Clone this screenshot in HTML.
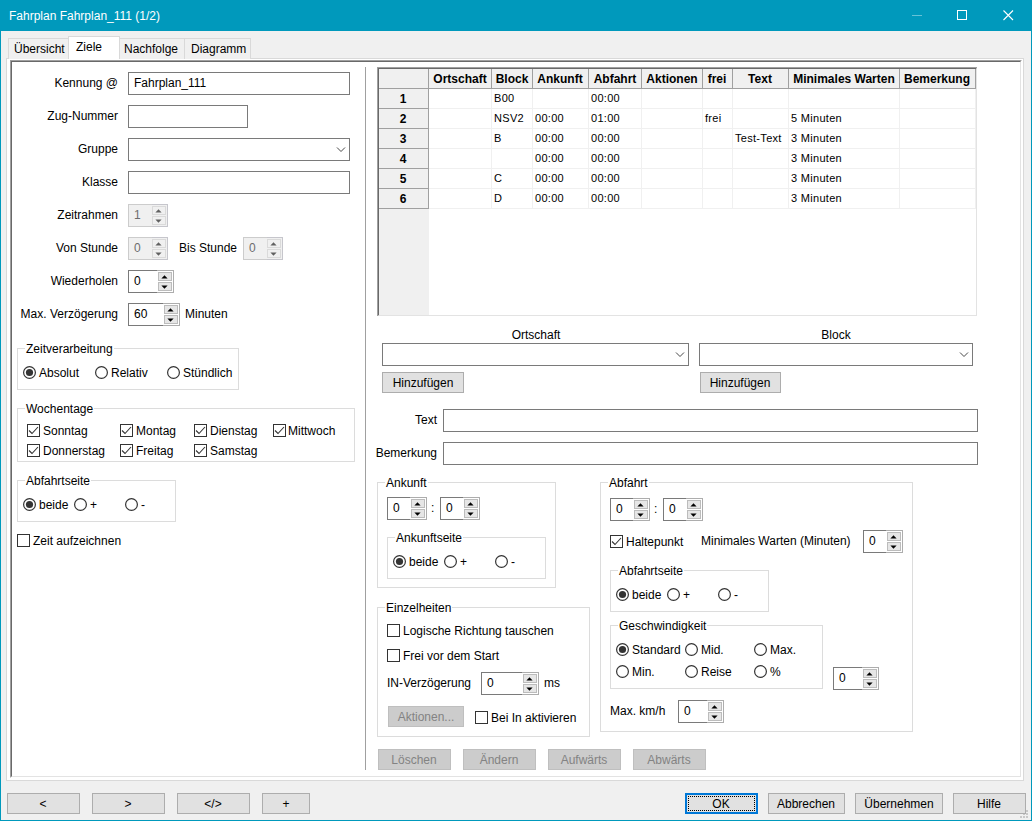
<!DOCTYPE html>
<html><head><meta charset="utf-8"><style>
html,body{margin:0;padding:0;width:1032px;height:821px;overflow:hidden;background:#f0f0f0}
body>div,body>svg{position:absolute;box-sizing:border-box}
.t{font-family:'Liberation Sans',sans-serif;font-size:12px;line-height:14px;white-space:nowrap;color:#000}
</style></head><body>
<div style="left:0;top:0;width:1032px;height:821px;background:#0099bc"></div>
<div style="left:1px;top:31px;width:1030px;height:789px;background:#f0f0f0;"></div>
<div class="t" style="left:9px;top:9px;color:#fff">Fahrplan Fahrplan_111 (1/2)</div>
<div style="left:912px;top:15px;width:10px;height:1px;background:#66c2d7"></div>
<div style="left:957px;top:10px;width:10px;height:10px;border:1px solid #fff;"></div>
<svg style="left:1003px;top:10px" width="11" height="11"><path d="M0.5 0.5 L10 10 M10 0.5 L0.5 10" stroke="#fff" stroke-width="1.1"/></svg>
<div style="left:6px;top:58px;width:1018px;height:723px;background:#fff;border:1px solid #d9d9d9;"></div>
<div style="left:8px;top:38px;width:61px;height:21px;background:#f0f0f0;border:1px solid #d9d9d9;border-bottom:none;"></div>
<div style="left:119px;top:38px;width:66px;height:21px;background:#f0f0f0;border:1px solid #d9d9d9;border-bottom:none;"></div>
<div style="left:184px;top:38px;width:67px;height:21px;background:#f0f0f0;border:1px solid #d9d9d9;border-bottom:none;"></div>
<div style="left:68px;top:36px;width:52px;height:23px;background:#fff;border:1px solid #d9d9d9;border-bottom:none;"></div>
<div class="t" style="left:14px;top:42px;">Übersicht</div>
<div class="t" style="left:76px;top:40px;">Ziele</div>
<div class="t" style="left:124px;top:42px;">Nachfolge</div>
<div class="t" style="left:191px;top:42px;">Diagramm</div>
<div style="left:10px;top:60px;width:1012px;height:718px;border-top:1px solid #a0a0a0;border-left:1px solid #a0a0a0;border-right:1px solid #fff;border-bottom:1px solid #fff;"></div>
<div style="left:11px;top:61px;width:1010px;height:716px;border-top:1px solid #696969;border-left:1px solid #696969;border-right:1px solid #e3e3e3;border-bottom:1px solid #e3e3e3;"></div>
<div style="left:365px;top:67px;width:1px;height:703px;background:#a0a0a0;"></div>
<div class="t" style="right:914px;top:76px;">Kennung @</div>
<div style="left:128px;top:72px;width:222px;height:23px;background:#fff;border:1px solid #7a7a7a;"></div>
<div class="t" style="left:134px;top:76px;">Fahrplan_111</div>
<div class="t" style="right:914px;top:109px;">Zug-Nummer</div>
<div style="left:128px;top:105px;width:120px;height:23px;background:#fff;border:1px solid #7a7a7a;"></div>
<div class="t" style="right:914px;top:142px;">Gruppe</div>
<div style="left:128px;top:138px;width:222px;height:23px;background:#fff;border:1px solid #7a7a7a;"></div>
<svg style="left:336px;top:146px" width="10" height="7"><path d="M1 1.5 L5 5.5 L9 1.5" fill="none" stroke="#484848" stroke-width="1"/></svg>
<div class="t" style="right:914px;top:175px;">Klasse</div>
<div style="left:128px;top:171px;width:222px;height:23px;background:#fff;border:1px solid #7a7a7a;"></div>
<div class="t" style="right:914px;top:208px;">Zeitrahmen</div>
<div style="left:128px;top:204px;width:40px;height:23px;background:#f0f0f0;border:1px solid #cccccc;"></div>
<div style="left:152px;top:204px;width:16px;height:23px;border:1px solid #c6c6cc;border-left:none;"></div>
<div style="left:152px;top:206px;width:14px;height:9px;background:#f0f0f0;border:1px solid #dadada;"></div>
<div style="left:152px;top:216px;width:14px;height:9px;background:#f0f0f0;border:1px solid #dadada;"></div>
<div class="t" style="left:134px;top:208px;color:#6d6d6d">1</div>
<svg style="left:155px;top:209px" width="7" height="4"><path d="M3.5 0.2 L6.6 3.6 L0.4 3.6 Z" fill="#606060"/></svg>
<svg style="left:155px;top:219px" width="7" height="4"><path d="M0.4 0.4 L6.6 0.4 L3.5 3.8 Z" fill="#606060"/></svg>
<div class="t" style="right:914px;top:241px;">Von Stunde</div>
<div style="left:128px;top:237px;width:40px;height:23px;background:#f0f0f0;border:1px solid #cccccc;"></div>
<div style="left:152px;top:237px;width:16px;height:23px;border:1px solid #c6c6cc;border-left:none;"></div>
<div style="left:152px;top:239px;width:14px;height:9px;background:#f0f0f0;border:1px solid #dadada;"></div>
<div style="left:152px;top:249px;width:14px;height:9px;background:#f0f0f0;border:1px solid #dadada;"></div>
<div class="t" style="left:134px;top:241px;color:#6d6d6d">0</div>
<svg style="left:155px;top:242px" width="7" height="4"><path d="M3.5 0.2 L6.6 3.6 L0.4 3.6 Z" fill="#606060"/></svg>
<svg style="left:155px;top:252px" width="7" height="4"><path d="M0.4 0.4 L6.6 0.4 L3.5 3.8 Z" fill="#606060"/></svg>
<div class="t" style="left:179px;top:241px;">Bis Stunde</div>
<div style="left:243px;top:237px;width:40px;height:23px;background:#f0f0f0;border:1px solid #cccccc;"></div>
<div style="left:267px;top:237px;width:16px;height:23px;border:1px solid #c6c6cc;border-left:none;"></div>
<div style="left:267px;top:239px;width:14px;height:9px;background:#f0f0f0;border:1px solid #dadada;"></div>
<div style="left:267px;top:249px;width:14px;height:9px;background:#f0f0f0;border:1px solid #dadada;"></div>
<div class="t" style="left:249px;top:241px;color:#6d6d6d">0</div>
<svg style="left:270px;top:242px" width="7" height="4"><path d="M3.5 0.2 L6.6 3.6 L0.4 3.6 Z" fill="#606060"/></svg>
<svg style="left:270px;top:252px" width="7" height="4"><path d="M0.4 0.4 L6.6 0.4 L3.5 3.8 Z" fill="#606060"/></svg>
<div class="t" style="right:914px;top:274px;">Wiederholen</div>
<div style="left:128px;top:270px;width:46px;height:23px;background:#fff;border:1px solid #7a7a7a;"></div>
<div style="left:157px;top:270px;width:17px;height:23px;border:1px solid #adadad;border-left:none;"></div>
<div style="left:158px;top:272px;width:14px;height:9px;background:#e6e6e6;border:1px solid #bcbcbc;"></div>
<div style="left:158px;top:282px;width:14px;height:9px;background:#e6e6e6;border:1px solid #bcbcbc;"></div>
<div class="t" style="left:134px;top:274px;color:#000">0</div>
<svg style="left:161px;top:275px" width="7" height="4"><path d="M3.5 0.2 L6.6 3.6 L0.4 3.6 Z" fill="#000"/></svg>
<svg style="left:161px;top:285px" width="7" height="4"><path d="M0.4 0.4 L6.6 0.4 L3.5 3.8 Z" fill="#000"/></svg>
<div class="t" style="right:914px;top:307px;">Max. Verzögerung</div>
<div style="left:128px;top:303px;width:52px;height:23px;background:#fff;border:1px solid #7a7a7a;"></div>
<div style="left:163px;top:303px;width:17px;height:23px;border:1px solid #adadad;border-left:none;"></div>
<div style="left:164px;top:305px;width:14px;height:9px;background:#e6e6e6;border:1px solid #bcbcbc;"></div>
<div style="left:164px;top:315px;width:14px;height:9px;background:#e6e6e6;border:1px solid #bcbcbc;"></div>
<div class="t" style="left:134px;top:307px;color:#000">60</div>
<svg style="left:167px;top:308px" width="7" height="4"><path d="M3.5 0.2 L6.6 3.6 L0.4 3.6 Z" fill="#000"/></svg>
<svg style="left:167px;top:318px" width="7" height="4"><path d="M0.4 0.4 L6.6 0.4 L3.5 3.8 Z" fill="#000"/></svg>
<div class="t" style="left:185px;top:307px;">Minuten</div>
<div style="left:17px;top:348px;width:222px;height:42px;border:1px solid #dcdcdc;"></div>
<div class="t" style="left:25px;top:342px;background:#fff;padding:0 1px;">Zeitverarbeitung</div>
<svg style="left:23px;top:366px" width="13" height="13"><circle cx="6.5" cy="6.5" r="5.9" fill="#fff" stroke="#333" stroke-width="1.2"/><circle cx="6.5" cy="6.5" r="3.6" fill="#333"/></svg>
<div class="t" style="left:39px;top:366px;">Absolut</div>
<svg style="left:95px;top:366px" width="13" height="13"><circle cx="6.5" cy="6.5" r="5.9" fill="#fff" stroke="#333" stroke-width="1.2"/></svg>
<div class="t" style="left:111px;top:366px;">Relativ</div>
<svg style="left:167px;top:366px" width="13" height="13"><circle cx="6.5" cy="6.5" r="5.9" fill="#fff" stroke="#333" stroke-width="1.2"/></svg>
<div class="t" style="left:183px;top:366px;">Stündlich</div>
<div style="left:17px;top:408px;width:338px;height:54px;border:1px solid #dcdcdc;"></div>
<div class="t" style="left:25px;top:402px;background:#fff;padding:0 1px;">Wochentage</div>
<svg style="left:27px;top:424px" width="13" height="13"><rect x="0.5" y="0.5" width="12" height="12" fill="#fff" stroke="#333"/><path d="M2 6.5 L5 9.5 L11 3" fill="none" stroke="#333" stroke-width="1.1"/></svg>
<div class="t" style="left:43px;top:424px;">Sonntag</div>
<svg style="left:120px;top:424px" width="13" height="13"><rect x="0.5" y="0.5" width="12" height="12" fill="#fff" stroke="#333"/><path d="M2 6.5 L5 9.5 L11 3" fill="none" stroke="#333" stroke-width="1.1"/></svg>
<div class="t" style="left:136px;top:424px;">Montag</div>
<svg style="left:194px;top:424px" width="13" height="13"><rect x="0.5" y="0.5" width="12" height="12" fill="#fff" stroke="#333"/><path d="M2 6.5 L5 9.5 L11 3" fill="none" stroke="#333" stroke-width="1.1"/></svg>
<div class="t" style="left:210px;top:424px;">Dienstag</div>
<svg style="left:273px;top:424px" width="13" height="13"><rect x="0.5" y="0.5" width="12" height="12" fill="#fff" stroke="#333"/><path d="M2 6.5 L5 9.5 L11 3" fill="none" stroke="#333" stroke-width="1.1"/></svg>
<div class="t" style="left:288px;top:424px;">Mittwoch</div>
<svg style="left:27px;top:444px" width="13" height="13"><rect x="0.5" y="0.5" width="12" height="12" fill="#fff" stroke="#333"/><path d="M2 6.5 L5 9.5 L11 3" fill="none" stroke="#333" stroke-width="1.1"/></svg>
<div class="t" style="left:43px;top:444px;">Donnerstag</div>
<svg style="left:120px;top:444px" width="13" height="13"><rect x="0.5" y="0.5" width="12" height="12" fill="#fff" stroke="#333"/><path d="M2 6.5 L5 9.5 L11 3" fill="none" stroke="#333" stroke-width="1.1"/></svg>
<div class="t" style="left:136px;top:444px;">Freitag</div>
<svg style="left:194px;top:444px" width="13" height="13"><rect x="0.5" y="0.5" width="12" height="12" fill="#fff" stroke="#333"/><path d="M2 6.5 L5 9.5 L11 3" fill="none" stroke="#333" stroke-width="1.1"/></svg>
<div class="t" style="left:210px;top:444px;">Samstag</div>
<div style="left:17px;top:480px;width:159px;height:42px;border:1px solid #dcdcdc;"></div>
<div class="t" style="left:25px;top:474px;background:#fff;padding:0 1px;">Abfahrtseite</div>
<svg style="left:23px;top:498px" width="13" height="13"><circle cx="6.5" cy="6.5" r="5.9" fill="#fff" stroke="#333" stroke-width="1.2"/><circle cx="6.5" cy="6.5" r="3.6" fill="#333"/></svg>
<div class="t" style="left:39px;top:498px;">beide</div>
<svg style="left:74px;top:498px" width="13" height="13"><circle cx="6.5" cy="6.5" r="5.9" fill="#fff" stroke="#333" stroke-width="1.2"/></svg>
<div class="t" style="left:90px;top:498px;">+</div>
<svg style="left:125px;top:498px" width="13" height="13"><circle cx="6.5" cy="6.5" r="5.9" fill="#fff" stroke="#333" stroke-width="1.2"/></svg>
<div class="t" style="left:141px;top:498px;">-</div>
<svg style="left:17px;top:534px" width="13" height="13"><rect x="0.5" y="0.5" width="12" height="12" fill="#fff" stroke="#333"/></svg>
<div class="t" style="left:33px;top:534px;">Zeit aufzeichnen</div>
<div style="left:377px;top:67px;width:600px;height:249px;background:#fff;border-top:2px solid #696969;border-left:2px solid #696969;border-right:1px solid #e3e3e3;border-bottom:1px solid #e3e3e3;"></div>
<div style="left:377px;top:67px;width:600px;height:1px;background:#a0a0a0"></div>
<div style="left:377px;top:67px;width:1px;height:249px;background:#a0a0a0"></div>
<div style="left:379px;top:69px;width:50px;height:246px;background:#f0f0f0;"></div>
<div style="left:379px;top:69px;width:597px;height:20px;background:#f0f0f0;"></div>
<div style="left:428px;top:69px;width:1px;height:20px;background:#a0a0a0;"></div>
<div style="left:491px;top:69px;width:1px;height:20px;background:#a0a0a0;"></div>
<div style="left:532px;top:69px;width:1px;height:20px;background:#a0a0a0;"></div>
<div style="left:588px;top:69px;width:1px;height:20px;background:#a0a0a0;"></div>
<div style="left:641px;top:69px;width:1px;height:20px;background:#a0a0a0;"></div>
<div style="left:702px;top:69px;width:1px;height:20px;background:#a0a0a0;"></div>
<div style="left:732px;top:69px;width:1px;height:20px;background:#a0a0a0;"></div>
<div style="left:788px;top:69px;width:1px;height:20px;background:#a0a0a0;"></div>
<div style="left:899px;top:69px;width:1px;height:20px;background:#a0a0a0;"></div>
<div style="left:975px;top:69px;width:1px;height:20px;background:#a0a0a0;"></div>
<div style="left:379px;top:88px;width:597px;height:1px;background:#a0a0a0;"></div>
<div class="t" style="left:260px;width:400px;text-align:center;top:72px;font-weight:bold">Ortschaft</div>
<div class="t" style="left:312px;width:400px;text-align:center;top:72px;font-weight:bold">Block</div>
<div class="t" style="left:360px;width:400px;text-align:center;top:72px;font-weight:bold">Ankunft</div>
<div class="t" style="left:415px;width:400px;text-align:center;top:72px;font-weight:bold">Abfahrt</div>
<div class="t" style="left:472px;width:400px;text-align:center;top:72px;font-weight:bold">Aktionen</div>
<div class="t" style="left:517px;width:400px;text-align:center;top:72px;font-weight:bold">frei</div>
<div class="t" style="left:560px;width:400px;text-align:center;top:72px;font-weight:bold">Text</div>
<div class="t" style="left:644px;width:400px;text-align:center;top:72px;font-weight:bold">Minimales Warten</div>
<div class="t" style="left:737px;width:400px;text-align:center;top:72px;font-weight:bold">Bemerkung</div>
<div style="left:379px;top:108px;width:50px;height:1px;background:#a0a0a0;"></div>
<div style="left:428px;top:89px;width:1px;height:20px;background:#a0a0a0;"></div>
<div class="t" style="left:203px;width:400px;text-align:center;top:92px;font-weight:bold">1</div>
<div style="left:429px;top:108px;width:547px;height:1px;background:#f0f0f0;"></div>
<div style="left:491px;top:89px;width:1px;height:20px;background:#f0f0f0;"></div>
<div style="left:532px;top:89px;width:1px;height:20px;background:#f0f0f0;"></div>
<div style="left:588px;top:89px;width:1px;height:20px;background:#f0f0f0;"></div>
<div style="left:641px;top:89px;width:1px;height:20px;background:#f0f0f0;"></div>
<div style="left:702px;top:89px;width:1px;height:20px;background:#f0f0f0;"></div>
<div style="left:732px;top:89px;width:1px;height:20px;background:#f0f0f0;"></div>
<div style="left:788px;top:89px;width:1px;height:20px;background:#f0f0f0;"></div>
<div style="left:899px;top:89px;width:1px;height:20px;background:#f0f0f0;"></div>
<div style="left:975px;top:89px;width:1px;height:20px;background:#f0f0f0;"></div>
<div class="t" style="left:494px;top:91px;font-size:11px;letter-spacing:0.3px">B00</div>
<div class="t" style="left:591px;top:91px;font-size:11px;letter-spacing:0.3px">00:00</div>
<div style="left:379px;top:128px;width:50px;height:1px;background:#a0a0a0;"></div>
<div style="left:428px;top:109px;width:1px;height:20px;background:#a0a0a0;"></div>
<div class="t" style="left:203px;width:400px;text-align:center;top:112px;font-weight:bold">2</div>
<div style="left:429px;top:128px;width:547px;height:1px;background:#f0f0f0;"></div>
<div style="left:491px;top:109px;width:1px;height:20px;background:#f0f0f0;"></div>
<div style="left:532px;top:109px;width:1px;height:20px;background:#f0f0f0;"></div>
<div style="left:588px;top:109px;width:1px;height:20px;background:#f0f0f0;"></div>
<div style="left:641px;top:109px;width:1px;height:20px;background:#f0f0f0;"></div>
<div style="left:702px;top:109px;width:1px;height:20px;background:#f0f0f0;"></div>
<div style="left:732px;top:109px;width:1px;height:20px;background:#f0f0f0;"></div>
<div style="left:788px;top:109px;width:1px;height:20px;background:#f0f0f0;"></div>
<div style="left:899px;top:109px;width:1px;height:20px;background:#f0f0f0;"></div>
<div style="left:975px;top:109px;width:1px;height:20px;background:#f0f0f0;"></div>
<div class="t" style="left:494px;top:111px;font-size:11px;letter-spacing:0.3px">NSV2</div>
<div class="t" style="left:535px;top:111px;font-size:11px;letter-spacing:0.3px">00:00</div>
<div class="t" style="left:591px;top:111px;font-size:11px;letter-spacing:0.3px">01:00</div>
<div class="t" style="left:705px;top:111px;font-size:11px;letter-spacing:0.3px">frei</div>
<div class="t" style="left:791px;top:111px;font-size:11px;letter-spacing:0.3px">5 Minuten</div>
<div style="left:379px;top:148px;width:50px;height:1px;background:#a0a0a0;"></div>
<div style="left:428px;top:129px;width:1px;height:20px;background:#a0a0a0;"></div>
<div class="t" style="left:203px;width:400px;text-align:center;top:132px;font-weight:bold">3</div>
<div style="left:429px;top:148px;width:547px;height:1px;background:#f0f0f0;"></div>
<div style="left:491px;top:129px;width:1px;height:20px;background:#f0f0f0;"></div>
<div style="left:532px;top:129px;width:1px;height:20px;background:#f0f0f0;"></div>
<div style="left:588px;top:129px;width:1px;height:20px;background:#f0f0f0;"></div>
<div style="left:641px;top:129px;width:1px;height:20px;background:#f0f0f0;"></div>
<div style="left:702px;top:129px;width:1px;height:20px;background:#f0f0f0;"></div>
<div style="left:732px;top:129px;width:1px;height:20px;background:#f0f0f0;"></div>
<div style="left:788px;top:129px;width:1px;height:20px;background:#f0f0f0;"></div>
<div style="left:899px;top:129px;width:1px;height:20px;background:#f0f0f0;"></div>
<div style="left:975px;top:129px;width:1px;height:20px;background:#f0f0f0;"></div>
<div class="t" style="left:494px;top:131px;font-size:11px;letter-spacing:0.3px">B</div>
<div class="t" style="left:535px;top:131px;font-size:11px;letter-spacing:0.3px">00:00</div>
<div class="t" style="left:591px;top:131px;font-size:11px;letter-spacing:0.3px">00:00</div>
<div class="t" style="left:735px;top:131px;font-size:11px;letter-spacing:0.3px">Test-Text</div>
<div class="t" style="left:791px;top:131px;font-size:11px;letter-spacing:0.3px">3 Minuten</div>
<div style="left:379px;top:168px;width:50px;height:1px;background:#a0a0a0;"></div>
<div style="left:428px;top:149px;width:1px;height:20px;background:#a0a0a0;"></div>
<div class="t" style="left:203px;width:400px;text-align:center;top:152px;font-weight:bold">4</div>
<div style="left:429px;top:168px;width:547px;height:1px;background:#f0f0f0;"></div>
<div style="left:491px;top:149px;width:1px;height:20px;background:#f0f0f0;"></div>
<div style="left:532px;top:149px;width:1px;height:20px;background:#f0f0f0;"></div>
<div style="left:588px;top:149px;width:1px;height:20px;background:#f0f0f0;"></div>
<div style="left:641px;top:149px;width:1px;height:20px;background:#f0f0f0;"></div>
<div style="left:702px;top:149px;width:1px;height:20px;background:#f0f0f0;"></div>
<div style="left:732px;top:149px;width:1px;height:20px;background:#f0f0f0;"></div>
<div style="left:788px;top:149px;width:1px;height:20px;background:#f0f0f0;"></div>
<div style="left:899px;top:149px;width:1px;height:20px;background:#f0f0f0;"></div>
<div style="left:975px;top:149px;width:1px;height:20px;background:#f0f0f0;"></div>
<div class="t" style="left:535px;top:151px;font-size:11px;letter-spacing:0.3px">00:00</div>
<div class="t" style="left:591px;top:151px;font-size:11px;letter-spacing:0.3px">00:00</div>
<div class="t" style="left:791px;top:151px;font-size:11px;letter-spacing:0.3px">3 Minuten</div>
<div style="left:379px;top:188px;width:50px;height:1px;background:#a0a0a0;"></div>
<div style="left:428px;top:169px;width:1px;height:20px;background:#a0a0a0;"></div>
<div class="t" style="left:203px;width:400px;text-align:center;top:172px;font-weight:bold">5</div>
<div style="left:429px;top:188px;width:547px;height:1px;background:#f0f0f0;"></div>
<div style="left:491px;top:169px;width:1px;height:20px;background:#f0f0f0;"></div>
<div style="left:532px;top:169px;width:1px;height:20px;background:#f0f0f0;"></div>
<div style="left:588px;top:169px;width:1px;height:20px;background:#f0f0f0;"></div>
<div style="left:641px;top:169px;width:1px;height:20px;background:#f0f0f0;"></div>
<div style="left:702px;top:169px;width:1px;height:20px;background:#f0f0f0;"></div>
<div style="left:732px;top:169px;width:1px;height:20px;background:#f0f0f0;"></div>
<div style="left:788px;top:169px;width:1px;height:20px;background:#f0f0f0;"></div>
<div style="left:899px;top:169px;width:1px;height:20px;background:#f0f0f0;"></div>
<div style="left:975px;top:169px;width:1px;height:20px;background:#f0f0f0;"></div>
<div class="t" style="left:494px;top:171px;font-size:11px;letter-spacing:0.3px">C</div>
<div class="t" style="left:535px;top:171px;font-size:11px;letter-spacing:0.3px">00:00</div>
<div class="t" style="left:591px;top:171px;font-size:11px;letter-spacing:0.3px">00:00</div>
<div class="t" style="left:791px;top:171px;font-size:11px;letter-spacing:0.3px">3 Minuten</div>
<div style="left:379px;top:208px;width:50px;height:1px;background:#a0a0a0;"></div>
<div style="left:428px;top:189px;width:1px;height:20px;background:#a0a0a0;"></div>
<div class="t" style="left:203px;width:400px;text-align:center;top:192px;font-weight:bold">6</div>
<div style="left:429px;top:208px;width:547px;height:1px;background:#f0f0f0;"></div>
<div style="left:491px;top:189px;width:1px;height:20px;background:#f0f0f0;"></div>
<div style="left:532px;top:189px;width:1px;height:20px;background:#f0f0f0;"></div>
<div style="left:588px;top:189px;width:1px;height:20px;background:#f0f0f0;"></div>
<div style="left:641px;top:189px;width:1px;height:20px;background:#f0f0f0;"></div>
<div style="left:702px;top:189px;width:1px;height:20px;background:#f0f0f0;"></div>
<div style="left:732px;top:189px;width:1px;height:20px;background:#f0f0f0;"></div>
<div style="left:788px;top:189px;width:1px;height:20px;background:#f0f0f0;"></div>
<div style="left:899px;top:189px;width:1px;height:20px;background:#f0f0f0;"></div>
<div style="left:975px;top:189px;width:1px;height:20px;background:#f0f0f0;"></div>
<div class="t" style="left:494px;top:191px;font-size:11px;letter-spacing:0.3px">D</div>
<div class="t" style="left:535px;top:191px;font-size:11px;letter-spacing:0.3px">00:00</div>
<div class="t" style="left:591px;top:191px;font-size:11px;letter-spacing:0.3px">00:00</div>
<div class="t" style="left:791px;top:191px;font-size:11px;letter-spacing:0.3px">3 Minuten</div>
<div style="left:428px;top:209px;width:1px;height:106px;background:#f0f0f0;"></div>
<div class="t" style="left:336px;width:400px;text-align:center;top:328px;">Ortschaft</div>
<div style="left:382px;top:343px;width:307px;height:23px;background:#fff;border:1px solid #7a7a7a;"></div>
<svg style="left:675px;top:351px" width="10" height="7"><path d="M1 1.5 L5 5.5 L9 1.5" fill="none" stroke="#484848" stroke-width="1"/></svg>
<div style="left:382px;top:372px;width:82px;height:21px;background:#e1e1e1;border:1px solid #adadad;"></div>
<div class="t" style="left:223px;width:400px;text-align:center;top:376px;">Hinzufügen</div>
<div class="t" style="left:636px;width:400px;text-align:center;top:328px;">Block</div>
<div style="left:699px;top:343px;width:274px;height:23px;background:#fff;border:1px solid #7a7a7a;"></div>
<svg style="left:959px;top:351px" width="10" height="7"><path d="M1 1.5 L5 5.5 L9 1.5" fill="none" stroke="#484848" stroke-width="1"/></svg>
<div style="left:700px;top:372px;width:81px;height:21px;background:#e1e1e1;border:1px solid #adadad;"></div>
<div class="t" style="left:540px;width:400px;text-align:center;top:376px;">Hinzufügen</div>
<div class="t" style="right:595px;top:413px;">Text</div>
<div style="left:443px;top:409px;width:535px;height:23px;background:#fff;border:1px solid #7a7a7a;"></div>
<div class="t" style="right:595px;top:446px;">Bemerkung</div>
<div style="left:443px;top:442px;width:535px;height:23px;background:#fff;border:1px solid #7a7a7a;"></div>
<div style="left:377px;top:482px;width:179px;height:106px;border:1px solid #dcdcdc;"></div>
<div class="t" style="left:385px;top:476px;background:#fff;padding:0 1px;">Ankunft</div>
<div style="left:387px;top:497px;width:40px;height:23px;background:#fff;border:1px solid #7a7a7a;"></div>
<div style="left:410px;top:497px;width:17px;height:23px;border:1px solid #adadad;border-left:none;"></div>
<div style="left:411px;top:499px;width:14px;height:9px;background:#e6e6e6;border:1px solid #bcbcbc;"></div>
<div style="left:411px;top:509px;width:14px;height:9px;background:#e6e6e6;border:1px solid #bcbcbc;"></div>
<div class="t" style="left:393px;top:501px;color:#000">0</div>
<svg style="left:414px;top:502px" width="7" height="4"><path d="M3.5 0.2 L6.6 3.6 L0.4 3.6 Z" fill="#000"/></svg>
<svg style="left:414px;top:512px" width="7" height="4"><path d="M0.4 0.4 L6.6 0.4 L3.5 3.8 Z" fill="#000"/></svg>
<div class="t" style="left:431px;top:501px;">:</div>
<div style="left:440px;top:497px;width:40px;height:23px;background:#fff;border:1px solid #7a7a7a;"></div>
<div style="left:463px;top:497px;width:17px;height:23px;border:1px solid #adadad;border-left:none;"></div>
<div style="left:464px;top:499px;width:14px;height:9px;background:#e6e6e6;border:1px solid #bcbcbc;"></div>
<div style="left:464px;top:509px;width:14px;height:9px;background:#e6e6e6;border:1px solid #bcbcbc;"></div>
<div class="t" style="left:446px;top:501px;color:#000">0</div>
<svg style="left:467px;top:502px" width="7" height="4"><path d="M3.5 0.2 L6.6 3.6 L0.4 3.6 Z" fill="#000"/></svg>
<svg style="left:467px;top:512px" width="7" height="4"><path d="M0.4 0.4 L6.6 0.4 L3.5 3.8 Z" fill="#000"/></svg>
<div style="left:387px;top:537px;width:159px;height:42px;border:1px solid #dcdcdc;"></div>
<div class="t" style="left:395px;top:531px;background:#fff;padding:0 1px;">Ankunftseite</div>
<svg style="left:393px;top:555px" width="13" height="13"><circle cx="6.5" cy="6.5" r="5.9" fill="#fff" stroke="#333" stroke-width="1.2"/><circle cx="6.5" cy="6.5" r="3.6" fill="#333"/></svg>
<div class="t" style="left:409px;top:555px;">beide</div>
<svg style="left:444px;top:555px" width="13" height="13"><circle cx="6.5" cy="6.5" r="5.9" fill="#fff" stroke="#333" stroke-width="1.2"/></svg>
<div class="t" style="left:460px;top:555px;">+</div>
<svg style="left:495px;top:555px" width="13" height="13"><circle cx="6.5" cy="6.5" r="5.9" fill="#fff" stroke="#333" stroke-width="1.2"/></svg>
<div class="t" style="left:511px;top:555px;">-</div>
<div style="left:377px;top:607px;width:213px;height:130px;border:1px solid #dcdcdc;"></div>
<div class="t" style="left:385px;top:601px;background:#fff;padding:0 1px;">Einzelheiten</div>
<svg style="left:387px;top:624px" width="13" height="13"><rect x="0.5" y="0.5" width="12" height="12" fill="#fff" stroke="#333"/></svg>
<div class="t" style="left:403px;top:624px;">Logische Richtung tauschen</div>
<svg style="left:387px;top:649px" width="13" height="13"><rect x="0.5" y="0.5" width="12" height="12" fill="#fff" stroke="#333"/></svg>
<div class="t" style="left:403px;top:649px;">Frei vor dem Start</div>
<div class="t" style="left:387px;top:676px;">IN-Verzögerung</div>
<div style="left:481px;top:672px;width:58px;height:23px;background:#fff;border:1px solid #7a7a7a;"></div>
<div style="left:522px;top:672px;width:17px;height:23px;border:1px solid #adadad;border-left:none;"></div>
<div style="left:523px;top:674px;width:14px;height:9px;background:#e6e6e6;border:1px solid #bcbcbc;"></div>
<div style="left:523px;top:684px;width:14px;height:9px;background:#e6e6e6;border:1px solid #bcbcbc;"></div>
<div class="t" style="left:487px;top:676px;color:#000">0</div>
<svg style="left:526px;top:677px" width="7" height="4"><path d="M3.5 0.2 L6.6 3.6 L0.4 3.6 Z" fill="#000"/></svg>
<svg style="left:526px;top:687px" width="7" height="4"><path d="M0.4 0.4 L6.6 0.4 L3.5 3.8 Z" fill="#000"/></svg>
<div class="t" style="left:544px;top:676px;">ms</div>
<div style="left:388px;top:706px;width:76px;height:21px;background:#cccccc;border:1px solid #bfbfbf;"></div>
<div class="t" style="left:226px;width:400px;text-align:center;top:710px;color:#838383">Aktionen...</div>
<svg style="left:475px;top:711px" width="13" height="13"><rect x="0.5" y="0.5" width="12" height="12" fill="#fff" stroke="#333"/></svg>
<div class="t" style="left:491px;top:711px;">Bei In aktivieren</div>
<div style="left:600px;top:482px;width:313px;height:250px;border:1px solid #dcdcdc;"></div>
<div class="t" style="left:608px;top:476px;background:#fff;padding:0 1px;">Abfahrt</div>
<div style="left:610px;top:498px;width:40px;height:23px;background:#fff;border:1px solid #7a7a7a;"></div>
<div style="left:633px;top:498px;width:17px;height:23px;border:1px solid #adadad;border-left:none;"></div>
<div style="left:634px;top:500px;width:14px;height:9px;background:#e6e6e6;border:1px solid #bcbcbc;"></div>
<div style="left:634px;top:510px;width:14px;height:9px;background:#e6e6e6;border:1px solid #bcbcbc;"></div>
<div class="t" style="left:616px;top:502px;color:#000">0</div>
<svg style="left:637px;top:503px" width="7" height="4"><path d="M3.5 0.2 L6.6 3.6 L0.4 3.6 Z" fill="#000"/></svg>
<svg style="left:637px;top:513px" width="7" height="4"><path d="M0.4 0.4 L6.6 0.4 L3.5 3.8 Z" fill="#000"/></svg>
<div class="t" style="left:654px;top:502px;">:</div>
<div style="left:663px;top:498px;width:40px;height:23px;background:#fff;border:1px solid #7a7a7a;"></div>
<div style="left:686px;top:498px;width:17px;height:23px;border:1px solid #adadad;border-left:none;"></div>
<div style="left:687px;top:500px;width:14px;height:9px;background:#e6e6e6;border:1px solid #bcbcbc;"></div>
<div style="left:687px;top:510px;width:14px;height:9px;background:#e6e6e6;border:1px solid #bcbcbc;"></div>
<div class="t" style="left:669px;top:502px;color:#000">0</div>
<svg style="left:690px;top:503px" width="7" height="4"><path d="M3.5 0.2 L6.6 3.6 L0.4 3.6 Z" fill="#000"/></svg>
<svg style="left:690px;top:513px" width="7" height="4"><path d="M0.4 0.4 L6.6 0.4 L3.5 3.8 Z" fill="#000"/></svg>
<svg style="left:610px;top:535px" width="13" height="13"><rect x="0.5" y="0.5" width="12" height="12" fill="#fff" stroke="#333"/><path d="M2 6.5 L5 9.5 L11 3" fill="none" stroke="#333" stroke-width="1.1"/></svg>
<div class="t" style="left:626px;top:535px;">Haltepunkt</div>
<div class="t" style="left:701px;top:534px;">Minimales Warten (Minuten)</div>
<div style="left:863px;top:530px;width:40px;height:23px;background:#fff;border:1px solid #7a7a7a;"></div>
<div style="left:886px;top:530px;width:17px;height:23px;border:1px solid #adadad;border-left:none;"></div>
<div style="left:887px;top:532px;width:14px;height:9px;background:#e6e6e6;border:1px solid #bcbcbc;"></div>
<div style="left:887px;top:542px;width:14px;height:9px;background:#e6e6e6;border:1px solid #bcbcbc;"></div>
<div class="t" style="left:869px;top:534px;color:#000">0</div>
<svg style="left:890px;top:535px" width="7" height="4"><path d="M3.5 0.2 L6.6 3.6 L0.4 3.6 Z" fill="#000"/></svg>
<svg style="left:890px;top:545px" width="7" height="4"><path d="M0.4 0.4 L6.6 0.4 L3.5 3.8 Z" fill="#000"/></svg>
<div style="left:610px;top:570px;width:159px;height:42px;border:1px solid #dcdcdc;"></div>
<div class="t" style="left:618px;top:564px;background:#fff;padding:0 1px;">Abfahrtseite</div>
<svg style="left:616px;top:588px" width="13" height="13"><circle cx="6.5" cy="6.5" r="5.9" fill="#fff" stroke="#333" stroke-width="1.2"/><circle cx="6.5" cy="6.5" r="3.6" fill="#333"/></svg>
<div class="t" style="left:632px;top:588px;">beide</div>
<svg style="left:667px;top:588px" width="13" height="13"><circle cx="6.5" cy="6.5" r="5.9" fill="#fff" stroke="#333" stroke-width="1.2"/></svg>
<div class="t" style="left:683px;top:588px;">+</div>
<svg style="left:718px;top:588px" width="13" height="13"><circle cx="6.5" cy="6.5" r="5.9" fill="#fff" stroke="#333" stroke-width="1.2"/></svg>
<div class="t" style="left:734px;top:588px;">-</div>
<div style="left:610px;top:625px;width:213px;height:64px;border:1px solid #dcdcdc;"></div>
<div class="t" style="left:618px;top:619px;background:#fff;padding:0 1px;">Geschwindigkeit</div>
<svg style="left:616px;top:643px" width="13" height="13"><circle cx="6.5" cy="6.5" r="5.9" fill="#fff" stroke="#333" stroke-width="1.2"/><circle cx="6.5" cy="6.5" r="3.6" fill="#333"/></svg>
<div class="t" style="left:632px;top:643px;">Standard</div>
<svg style="left:685px;top:643px" width="13" height="13"><circle cx="6.5" cy="6.5" r="5.9" fill="#fff" stroke="#333" stroke-width="1.2"/></svg>
<div class="t" style="left:701px;top:643px;">Mid.</div>
<svg style="left:754px;top:643px" width="13" height="13"><circle cx="6.5" cy="6.5" r="5.9" fill="#fff" stroke="#333" stroke-width="1.2"/></svg>
<div class="t" style="left:770px;top:643px;">Max.</div>
<svg style="left:616px;top:665px" width="13" height="13"><circle cx="6.5" cy="6.5" r="5.9" fill="#fff" stroke="#333" stroke-width="1.2"/></svg>
<div class="t" style="left:632px;top:665px;">Min.</div>
<svg style="left:685px;top:665px" width="13" height="13"><circle cx="6.5" cy="6.5" r="5.9" fill="#fff" stroke="#333" stroke-width="1.2"/></svg>
<div class="t" style="left:701px;top:665px;">Reise</div>
<svg style="left:754px;top:665px" width="13" height="13"><circle cx="6.5" cy="6.5" r="5.9" fill="#fff" stroke="#333" stroke-width="1.2"/></svg>
<div class="t" style="left:770px;top:665px;">%</div>
<div style="left:833px;top:667px;width:46px;height:23px;background:#fff;border:1px solid #7a7a7a;"></div>
<div style="left:862px;top:667px;width:17px;height:23px;border:1px solid #adadad;border-left:none;"></div>
<div style="left:863px;top:669px;width:14px;height:9px;background:#e6e6e6;border:1px solid #bcbcbc;"></div>
<div style="left:863px;top:679px;width:14px;height:9px;background:#e6e6e6;border:1px solid #bcbcbc;"></div>
<div class="t" style="left:839px;top:671px;color:#000">0</div>
<svg style="left:866px;top:672px" width="7" height="4"><path d="M3.5 0.2 L6.6 3.6 L0.4 3.6 Z" fill="#000"/></svg>
<svg style="left:866px;top:682px" width="7" height="4"><path d="M0.4 0.4 L6.6 0.4 L3.5 3.8 Z" fill="#000"/></svg>
<div class="t" style="left:610px;top:704px;">Max. km/h</div>
<div style="left:678px;top:700px;width:46px;height:23px;background:#fff;border:1px solid #7a7a7a;"></div>
<div style="left:707px;top:700px;width:17px;height:23px;border:1px solid #adadad;border-left:none;"></div>
<div style="left:708px;top:702px;width:14px;height:9px;background:#e6e6e6;border:1px solid #bcbcbc;"></div>
<div style="left:708px;top:712px;width:14px;height:9px;background:#e6e6e6;border:1px solid #bcbcbc;"></div>
<div class="t" style="left:684px;top:704px;color:#000">0</div>
<svg style="left:711px;top:705px" width="7" height="4"><path d="M3.5 0.2 L6.6 3.6 L0.4 3.6 Z" fill="#000"/></svg>
<svg style="left:711px;top:715px" width="7" height="4"><path d="M0.4 0.4 L6.6 0.4 L3.5 3.8 Z" fill="#000"/></svg>
<div style="left:378px;top:749px;width:73px;height:21px;background:#cccccc;border:1px solid #bfbfbf;"></div>
<div class="t" style="left:214px;width:400px;text-align:center;top:753px;color:#838383">Löschen</div>
<div style="left:463px;top:749px;width:73px;height:21px;background:#cccccc;border:1px solid #bfbfbf;"></div>
<div class="t" style="left:299px;width:400px;text-align:center;top:753px;color:#838383">Ändern</div>
<div style="left:548px;top:749px;width:73px;height:21px;background:#cccccc;border:1px solid #bfbfbf;"></div>
<div class="t" style="left:384px;width:400px;text-align:center;top:753px;color:#838383">Aufwärts</div>
<div style="left:633px;top:749px;width:73px;height:21px;background:#cccccc;border:1px solid #bfbfbf;"></div>
<div class="t" style="left:469px;width:400px;text-align:center;top:753px;color:#838383">Abwärts</div>
<div style="left:1020px;top:816px;width:2px;height:2px;background:#c8c8c8;"></div>
<div style="left:1023px;top:816px;width:2px;height:2px;background:#c8c8c8;"></div>
<div style="left:1026px;top:816px;width:2px;height:2px;background:#c8c8c8;"></div>
<div style="left:1026px;top:813px;width:2px;height:2px;background:#c8c8c8;"></div>
<div style="left:1026px;top:810px;width:2px;height:2px;background:#c8c8c8;"></div>
<div style="left:1023px;top:813px;width:2px;height:2px;background:#c8c8c8;"></div>
<div style="left:7px;top:793px;width:73px;height:21px;background:#e1e1e1;border:1px solid #adadad;"></div>
<div class="t" style="left:-157px;width:400px;text-align:center;top:797px;">&lt;</div>
<div style="left:92px;top:793px;width:73px;height:21px;background:#e1e1e1;border:1px solid #adadad;"></div>
<div class="t" style="left:-72px;width:400px;text-align:center;top:797px;">&gt;</div>
<div style="left:177px;top:793px;width:73px;height:21px;background:#e1e1e1;border:1px solid #adadad;"></div>
<div class="t" style="left:13px;width:400px;text-align:center;top:797px;">&lt;/&gt;</div>
<div style="left:262px;top:793px;width:48px;height:21px;background:#e1e1e1;border:1px solid #adadad;"></div>
<div class="t" style="left:86px;width:400px;text-align:center;top:797px;">+</div>
<div style="left:685px;top:793px;width:73px;height:21px;background:#e1e1e1;border:2px solid #0078d7;"></div>
<div style="left:688px;top:796px;width:67px;height:15px;border:1px dotted #000;"></div>
<div class="t" style="left:521px;width:400px;text-align:center;top:797px;">OK</div>
<div style="left:768px;top:793px;width:77px;height:21px;background:#e1e1e1;border:1px solid #adadad;"></div>
<div class="t" style="left:606px;width:400px;text-align:center;top:797px;">Abbrechen</div>
<div style="left:855px;top:793px;width:88px;height:21px;background:#e1e1e1;border:1px solid #adadad;"></div>
<div class="t" style="left:699px;width:400px;text-align:center;top:797px;">Übernehmen</div>
<div style="left:953px;top:793px;width:73px;height:21px;background:#e1e1e1;border:1px solid #adadad;"></div>
<div class="t" style="left:789px;width:400px;text-align:center;top:797px;">Hilfe</div>
</body></html>
